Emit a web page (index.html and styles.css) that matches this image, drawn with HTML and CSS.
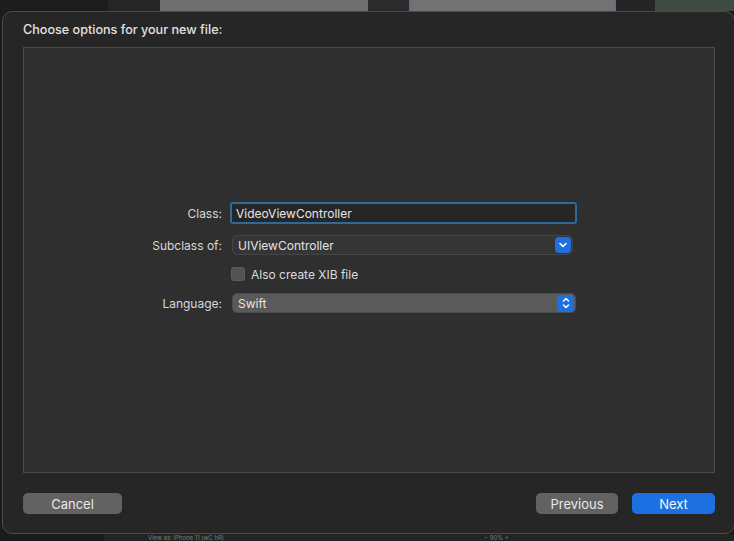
FILE: index.html
```html
<!DOCTYPE html>
<html>
<head>
<meta charset="utf-8">
<link rel="stylesheet" href="styles.css">
</head>
<body>
<div class="screen">
  <div class="backdrop-top">
    <div class="seg s1"></div>
    <div class="seg s2"></div>
    <div class="seg s3"></div>
    <div class="seg s4"></div>
    <div class="seg s5"></div>
    <div class="seg s6"></div>
    <div class="seg s7"></div>
  </div>
  <div class="sheet">
    <div class="title">Choose options for your new file:</div>
    <div class="panel">
      <div class="form">
        <div class="label">Class:</div>
        <div class="field"><span>VideoViewController</span></div>

        <div class="label">Subclass of:</div>
        <div class="popup dark">
          <span>UIViewController</span>
          <span class="knob">
            <svg width="16" height="16" viewBox="0 0 16 16"><path d="M5 6.5 L8 9.5 L11 6.5" fill="none" stroke="#fff" stroke-width="1.6" stroke-linecap="round" stroke-linejoin="round"/></svg>
          </span>
        </div>

        <div class="label"></div>
        <div class="check-row"><span class="checkbox"></span><span>Also create XIB file</span></div>

        <div class="label">Language:</div>
        <div class="popup light">
          <span>Swift</span>
          <span class="knob">
            <svg width="16" height="18" viewBox="0 0 16 18"><path d="M5.5 7 L8 4.5 L10.5 7 M5.5 11 L8 13.5 L10.5 11" fill="none" stroke="#fff" stroke-width="1.5" stroke-linecap="round" stroke-linejoin="round"/></svg>
          </span>
        </div>
      </div>
    </div>
    <div class="buttons">
      <button class="btn gray">Cancel</button>
      <div class="spacer"></div>
      <button class="btn gray prev">Previous</button>
      <button class="btn blue">Next</button>
    </div>
  </div>
  <div class="backdrop-bottom">
    <span class="status">View as: iPhone 11 (wC hR)</span>
    <span class="zoom">−  90%  +</span>
  </div>
</div>
</body>
</html>
```

FILE: styles.css
```css
html, body {
  margin: 0;
  padding: 0;
  background: #1b1b1c;
  width: 734px;
  height: 541px;
  overflow: hidden;
  font-family: Inter, "Liberation Sans", sans-serif;
}

.screen {
  display: flex;
  flex-direction: column;
  width: 734px;
  height: 541px;
}

.backdrop-top {
  display: flex;
  height: 11px;
  flex: none;
}
.seg { height: 100%; }
.s1 { width: 108px; background: #1c1c1d; }
.s2 { width: 52px; background: #262627; }
.s3 { width: 208px; background: #6f6f6f; }
.s4 { width: 41px; background: #2b2b2c; }
.s5 { width: 207px; background: #727274; border-left: 2px solid #6d6a80; border-right: 2px solid #6d6a80; box-sizing: border-box; }
.s6 { width: 39px; background: #252526; }
.s7 { flex: 1; background: #3d4b40; }

.sheet {
  flex: none;
  margin-left: 2px;
  width: 733px;
  height: 523px;
  box-sizing: border-box;
  background: #262627;
  border: 1px solid #4b4b4d;
  border-radius: 10px;
  padding: 0 0 0 20px;
  display: flex;
  flex-direction: column;
}

.title {
  color: #e2e2e2;
  font-size: 12.6px;
  font-weight: 500;
  height: 35px;
  line-height: 36px;
  padding-left: 0;
}

.panel {
  height: 426px;
  box-sizing: border-box;
  width: 692px;
  background: #2f2f30;
  border: 1px solid #4a4a4b;
  padding-top: 154px;
}

.form {
  display: grid;
  grid-template-columns: 198px 347px;
  grid-template-rows: 22px 20px 16px 20px;
  column-gap: 8px;
  row-gap: 11px;
}

.label {
  color: #d8d8d8;
  font-size: 12px;
  text-align: right;
  align-self: center;
}

.field {
  box-sizing: border-box;
  height: 22px;
  border: 2px solid #2c6a97;
  border-radius: 3px;
  background: #262627;
  color: #e6e6e6;
  font-size: 12px;
  padding-left: 4px;
  display: flex;
  align-items: center;
}

.popup {
  box-sizing: border-box;
  margin-left: 2px;
  height: 20px;
  border-radius: 5px;
  color: #e4e4e4;
  font-size: 12px;
  display: flex;
  align-items: center;
  justify-content: space-between;
  padding: 0 1px 0 5px;
}
.popup.dark {
  width: 341px;
  background: #353536;
  border: 1px solid #454547;
}
.popup.light {
  width: 344px;
  background: #5a5a5b;
  border: 1px solid #4c4c4d;
}

.knob {
  width: 16px;
  height: 16px;
  border-radius: 4px;
  background: #1f6fe0;
  display: flex;
  align-items: center;
  justify-content: center;
}
.popup.light .knob {
  width: 17px;
  height: 17px;
}

.check-row {
  display: flex;
  align-items: center;
  gap: 6px;
  color: #dcdcdc;
  font-size: 12px;
  padding-left: 1px;
}
.checkbox {
  width: 14px;
  height: 14px;
  box-sizing: border-box;
  border-radius: 3px;
  background: #535354;
  border: 1px solid #5e5e5f;
}

.buttons {
  display: flex;
  margin-top: 20px;
  height: 21px;
  width: 692px;
}
.spacer { flex: 1; }
.btn {
  font-family: inherit;
  font-size: 13px;
  color: #e8e8e8;
  border: none;
  border-radius: 5px;
  height: 21px;
  padding: 0;
  margin: 0;
}
.btn.gray { background: #626263; width: 99px; }
.btn.gray.prev { width: 82px; margin-right: 14px; }
.btn.blue { background: #1c70e2; width: 83px; color: #f4f7fc; }

.backdrop-bottom {
  flex: 1;
  margin-left: 104px;
  background: #232324;
  display: flex;
  align-items: center;
  overflow: hidden;
  color: #7d7d7d;
  font-size: 6px;
  line-height: 7px;
}
.status { margin-left: 44px; }
.zoom { margin-left: 260px; }
```
